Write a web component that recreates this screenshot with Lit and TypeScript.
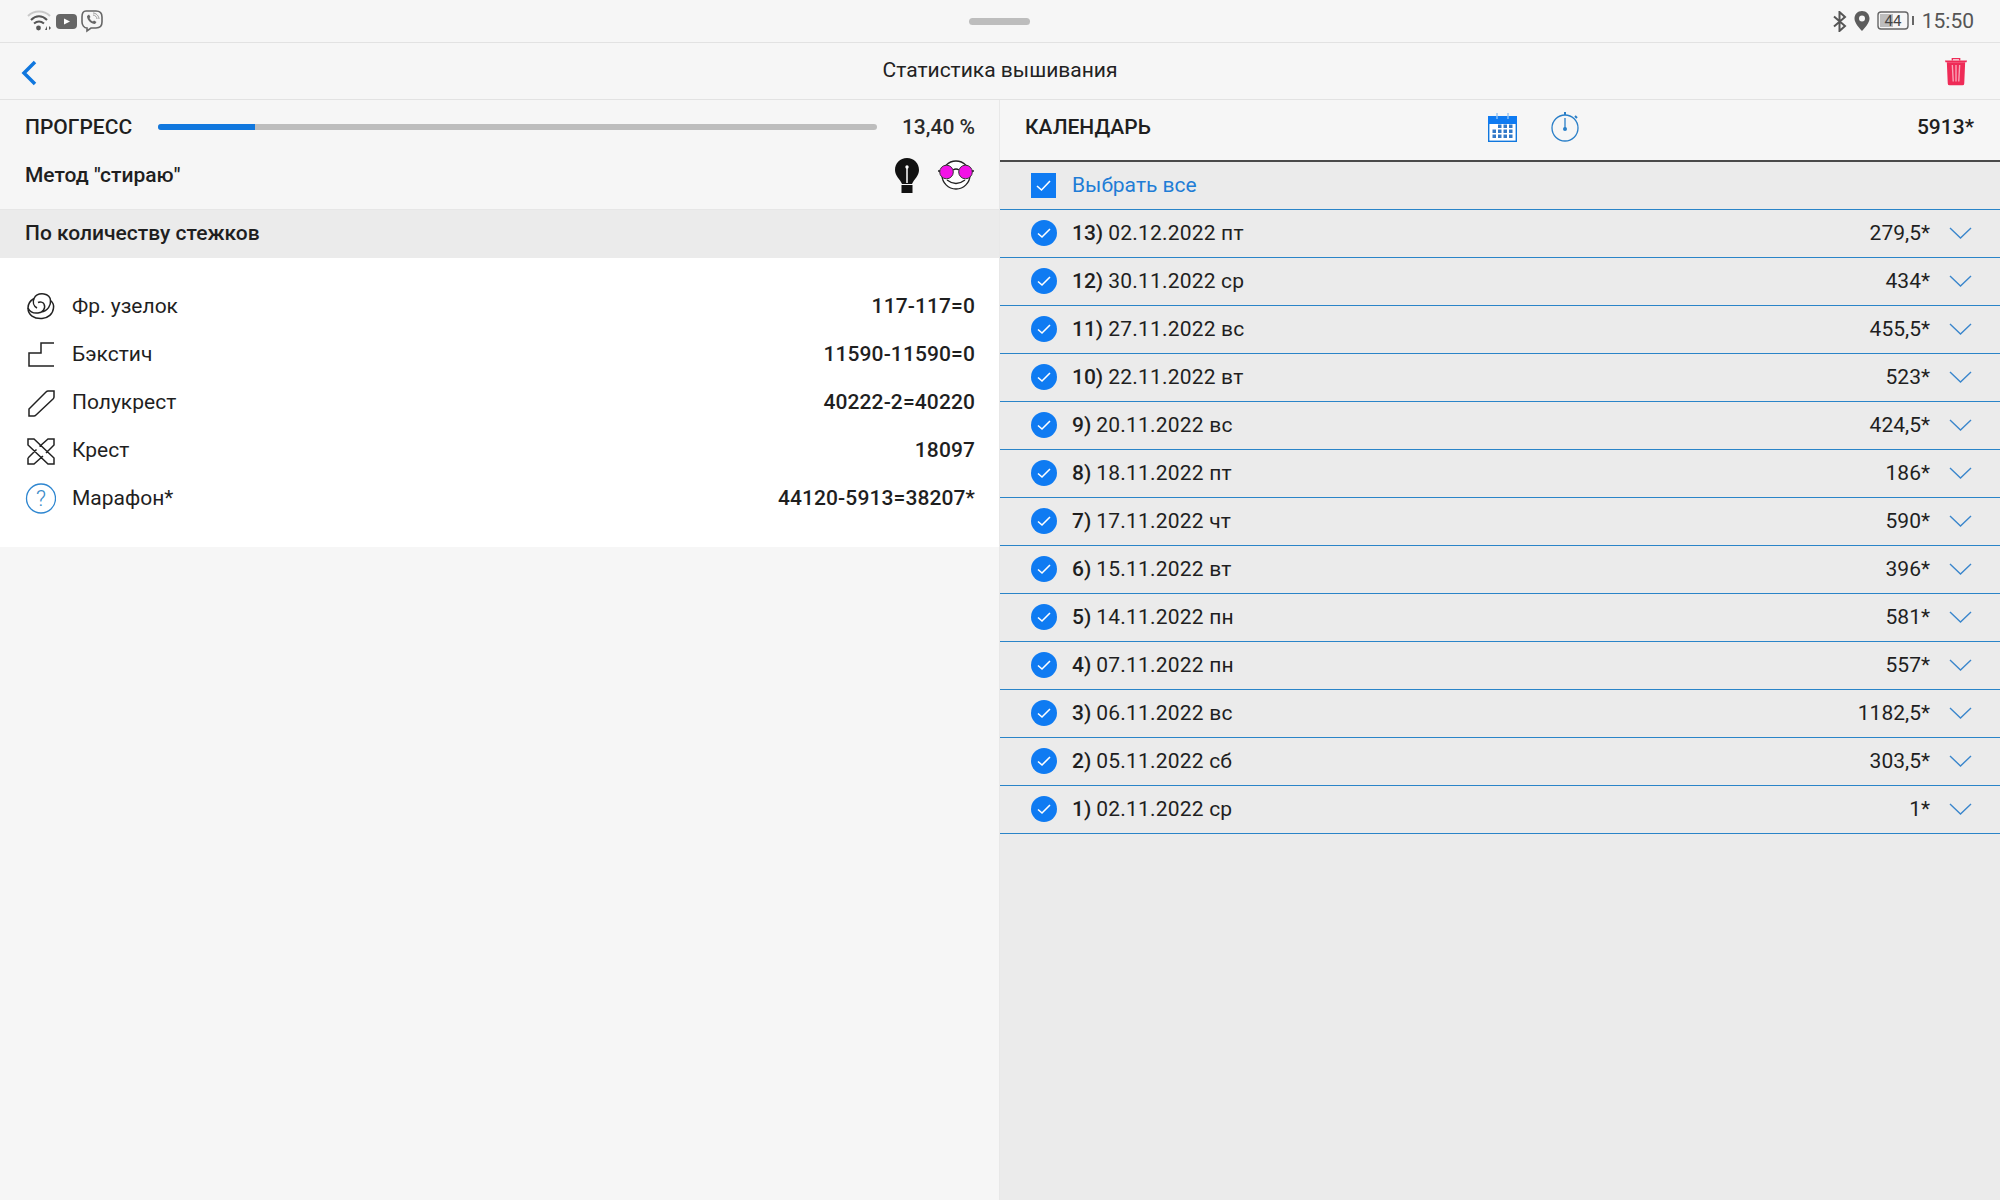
import { LitElement, html, css, svg } from "lit";
import { customElement } from "lit/decorators.js";

const days: [string, string, string][] = [
  ["13)", "02.12.2022 пт", "279,5*"],
  ["12)", "30.11.2022 ср", "434*"],
  ["11)", "27.11.2022 вс", "455,5*"],
  ["10)", "22.11.2022 вт", "523*"],
  ["9)", "20.11.2022 вс", "424,5*"],
  ["8)", "18.11.2022 пт", "186*"],
  ["7)", "17.11.2022 чт", "590*"],
  ["6)", "15.11.2022 вт", "396*"],
  ["5)", "14.11.2022 пн", "581*"],
  ["4)", "07.11.2022 пн", "557*"],
  ["3)", "06.11.2022 вс", "1182,5*"],
  ["2)", "05.11.2022 сб", "303,5*"],
  ["1)", "02.11.2022 ср", "1*"],
];

const icons = {
  knot: svg`<g fill="none" stroke="#222" stroke-width="1.500"><path d="M9 7.500C11 3.500 15 2.500 19 3C23 3.500 25.500 6.500 25.500 9.500C28 11.500 29 14 28.500 17C28 23 23 27 17 27.500C9 28 3 24 3 17C3 13 5.500 9.500 9 7.500Z"/><path d="M9 7.500C7.500 11 8.500 15 12 17M3 17C5 21 9 22.500 13 22C18 21.500 21 17 19 13C18 11 15 10.500 13 11.500M25.500 9.500C26 14 23 20 16 21"/></g>`,
  back: svg`<path d="M29 4H16V14H4V27H29" fill="none" stroke="#222" stroke-width="1.500"/>`,
  half: svg`<path d="M4 22L21 5Q22 4 23 4H29V10Q29 11 28 12L11 28Q10 29 9 29H4Z" fill="none" stroke="#222" stroke-width="1.500"/>`,
  cross: svg`<path d="M3 4H9L29 23V29H23L3 10ZM3 23L11.500 14.500M14.500 11.500L23 4H29V10L21 18M18 21L9 29H3V23" fill="none" stroke="#222" stroke-width="1.500"/>`,
  help: svg`<circle cx="16" cy="15.500" r="14.500" fill="none" stroke="#2e86d0" stroke-width="1.300"/><text x="16" y="23" text-anchor="middle" font-family="Roboto" font-weight="300" font-size="22" fill="#3a8ac8">?</text>`,
};

const stats = [
  [icons.knot, "Фр. узелок", "117-117=0"],
  [icons.back, "Бэкстич", "11590-11590=0"],
  [icons.half, "Полукрест", "40222-2=40220"],
  [icons.cross, "Крест", "18097"],
  [icons.help, "Марафон*", "44120-5913=38207*"],
] as const;

@customElement("app-root")
export class AppRoot extends LitElement {
  static styles = css`
    :host { display: block; width: 2000px; height: 1200px; background: #f6f6f6; font-family: Roboto, sans-serif; color: #1f1f1f; font-size: 21px; overflow: hidden; }
    .status { height: 42px; border-bottom: 1px solid #e2e2e2; display: flex; align-items: center; justify-content: space-between; padding: 0 26px 0 27px; position: relative; }
    .status-left, .status-right { display: flex; align-items: center; }
    .status-left { gap: 4px; }
    .status-right { color: #555; }
    .handle { position: absolute; left: 969px; top: 18px; width: 61px; height: 7px; border-radius: 4px; background: #bdbdbd; }
    .pin { margin-left: 6px; }
    .batt { margin-left: 7px; }
    .time { margin-left: 7px; }
    .titlebar { height: 56px; border-bottom: 1px solid #e2e2e2; display: flex; align-items: center; justify-content: space-between; padding: 0 33px 0 20px; position: relative; }
    .back-btn { position: relative; z-index: 1; margin-top: 3px; }
    .trash { position: relative; z-index: 1; }
    .title { position: absolute; left: 0; right: 0; top: 0; text-align: center; line-height: 55px; color: #222; }
    .columns { display: flex; height: 1100px; }
    .left { width: 999px; flex: none; border-right: 1px solid #e8e8e8; background: #f6f6f6; }
    .right { width: 1000px; flex: none; background: #ebebeb; }
    .progress { height: 54px; display: flex; align-items: center; padding: 0 24px 0 25px; }
    .caps { font-weight: 500; }
    .track { margin-left: 26px; width: 719px; height: 6px; border-radius: 3px; background: #bdbdbd; overflow: hidden; flex: none; }
    .fill { height: 100%; background: #1077de; }
    .pct { margin-left: auto; font-weight: 500; color: #2a2a2a; }
    .method { height: 55px; padding: 0 25px 13px; box-sizing: border-box; display: flex; align-items: center; justify-content: space-between; font-weight: 500; }
    .method-icons { display: flex; align-items: center; gap: 19px; }
    .section { height: 49px; background: #ebebeb; padding: 0 25px 2px; display: flex; align-items: center; font-weight: 500; box-sizing: border-box; border-top: 1px solid #e6e6e6; }
    .stats { background: #fff; height: 289px; padding-top: 24px; box-sizing: border-box; }
    .stat { height: 48px; display: flex; align-items: center; padding: 0 24px 0 25px; }
    .stat svg { width: 31px; height: 31px; flex: none; margin-right: 16px; }
    .stat .v { margin-left: auto; font-weight: 500; letter-spacing: 0.1px; }
    .cal { height: 62px; box-sizing: border-box; padding: 0 26px 6px 25px; background: #f6f6f6; display: flex; align-items: center; border-bottom: 2px solid #4a4a4a; }
    .cal-icons { display: flex; align-items: center; gap: 34px; margin-left: 337px; }
    .total { margin-left: auto; font-weight: 500; }
    .row { height: 48px; box-sizing: border-box; border-bottom: 1.5px solid #2a84c8; display: flex; align-items: center; padding: 0 28px 2px 31px; }
    .row.all { color: #1f7dd6; }
    .box { width: 25px; height: 25px; background: #0f7bf2; margin: 2px 16px 0 0; flex: none; display: flex; }
    .tick { width: 28px; height: 28px; margin-right: 13px; flex: none; }
    .num { font-weight: 500; margin-right: 5px; }
    .date { letter-spacing: 0.2px; }
    .amt { margin-left: auto; }
    .chev { width: 23px; height: 12px; margin-left: 19px; flex: none; }
  `;

  render() {
    return html`
      <div class="status">
        <div class="status-left">
          <svg width="25" height="22" viewBox="0 0 25 22"><path d="M1 6C7 0 17 0 23 6" fill="none" stroke="#c9c9c9" stroke-width="2"/><path d="M4 10C9 5 15 5 20 10M7 13.500C10 11 14 11 17 13.500" fill="none" stroke="#555" stroke-width="2"/><circle cx="11.500" cy="18" r="2.400" fill="#555"/><path d="M18 20l2-4v4zM22 16l2 2-2 2z" fill="#555"/></svg>
          <svg width="21" height="15" viewBox="0 0 21 15"><rect width="21" height="15" rx="4" fill="#666"/><path d="M8 4.500L14 7.500L8 10.500Z" fill="#fff"/></svg>
          <svg width="22" height="23" viewBox="0 0 22 23"><path d="M5 1H15C19 1 21 3 21 7V12C21 16 19 18 15 18H10L6 21V18C3 18 1 15 1 12V7C1 3 2 1 5 1Z" fill="none" stroke="#666" stroke-width="1.600"/><path d="M6 6C6 10 10 14 14 14L15.500 12L13 10.500L12 11.500C10.500 11 9 9.500 8.500 8L9.500 7L8 4.500Z" fill="#666"/><path d="M12 5C14 5 16 7 16 9M12 3C15 3 18 6 18 9" fill="none" stroke="#999" stroke-width="1"/></svg>
        </div>
        <div class="handle"></div>
        <div class="status-right">
          <svg width="16" height="21" viewBox="0 0 16 21"><path d="M2 5.500L13 15L7.500 20V1L13 6L2 15.500" fill="none" stroke="#555" stroke-width="2"/></svg>
          <svg class="pin" width="16" height="20" viewBox="0 0 16 20"><path d="M8 0C3.500 0 .5 3.500 .5 7.500C.5 12 5 16.500 8 20C11 16.500 15.500 12 15.500 7.500C15.500 3.500 12.500 0 8 0Z" fill="#5c5c5c"/><circle cx="8" cy="7.500" r="3" fill="#f6f6f6"/></svg>
          <svg class="batt" width="38" height="20" viewBox="0 0 38 20"><rect x="1" y="1" width="30" height="17" rx="3" fill="none" stroke="#666" stroke-width="1.400"/><rect x="3" y="3" width="13" height="13" fill="#bdbdbd"/><text x="16" y="15" text-anchor="middle" font-family="Roboto" font-size="15" fill="#444">44</text><rect x="35" y="5" width="2" height="9" fill="#666"/></svg>
          <span class="time">15:50</span>
        </div>
      </div>
      <div class="titlebar">
        <svg class="back-btn" width="18" height="26" viewBox="0 0 18 26"><path d="M15 2L4 13L15 24" fill="none" stroke="#1077de" stroke-width="3.500"/></svg>
        <div class="title">Статистика вышивания</div>
        <svg class="trash" width="22" height="29" viewBox="0 0 24 30"><path d="M8 3V1H16V3" fill="none" stroke="#ef2b57" stroke-width="1.500"/><path d="M0 3H24L23.500 5H.5Z" fill="#ef2b57"/><path d="M2 5H22L21 28Q21 30 19 30H5Q3 30 3 28Z" fill="#ef2b57"/><path d="M8 8L9 26M12 8V26M16 8L15 26" stroke="#f9a5b8" stroke-width="1.500"/></svg>
      </div>
      <div class="columns">
        <div class="left">
          <div class="progress">
            <span class="caps">ПРОГРЕСС</span>
            <div class="track"><div class="fill" style="width:13.4%"></div></div>
            <span class="pct">13,40 %</span>
          </div>
          <div class="method">
            <span>Метод "стираю"</span>
            <div class="method-icons">
              <svg width="24" height="35" viewBox="0 0 24 35"><path d="M12 0C5 0 0 5 0 12C0 18 5 21 7 26H17C19 21 24 18 24 12C24 5 19 0 12 0Z" fill="#111"/><rect x="6.500" y="27" width="11" height="8" fill="#111"/><path d="M12 9V25" stroke="#fff" stroke-width="1.500"/><circle cx="12" cy="9" r="1.700" fill="#fff"/></svg>
              <svg width="36" height="30" viewBox="0 0 36 30"><circle cx="18" cy="15" r="14" fill="#fff" stroke="#222" stroke-width="1.300"/><circle cx="8.500" cy="12" r="6.800" fill="#f212e6" stroke="#333"/><circle cx="27.500" cy="12" r="6.800" fill="#f212e6" stroke="#333"/><path d="M15 10Q18 8 21 10M0 11H2M34 11H36M9 20Q18 27 27 20" fill="none" stroke="#222" stroke-width="1.300"/></svg>
            </div>
          </div>
          <div class="section">По количеству стежков</div>
          <div class="stats">
            ${stats.map(
              ([icon, name, val]) => html`
                <div class="stat">
                  <svg viewBox="0 0 31 31">${icon}</svg>
                  <span>${name}</span>
                  <span class="v">${val}</span>
                </div>
              `
            )}
          </div>
        </div>
        <div class="right">
          <div class="cal">
            <span class="caps">КАЛЕНДАРЬ</span>
            <div class="cal-icons">
              <svg width="29" height="29" viewBox="0 0 29 29"><rect x=".7" y="3.700" width="27.600" height="24.600" fill="#fff" stroke="#1077de" stroke-width="1.400"/><rect x="0" y="3" width="29" height="8" fill="#0f7bf2"/><path d="M9 0V6M20 0V6" stroke="#8fc4f5" stroke-width="1.400"/><path d="M10 11.500h3.500v3.500h-3.500zM15.500 11.500h3.500v3.500h-3.500zM21 11.500h3.500v3.500h-3.500zM4.500 16.500h3.500v3.500h-3.500zM10 16.500h3.500v3.500h-3.500zM15.500 16.500h3.500v3.500h-3.500zM21 16.500h3.500v3.500h-3.500zM4.500 21.500h3.500v3.500h-3.500zM10 21.500h3.500v3.500h-3.500zM15.500 21.500h3.500v3.500h-3.500zM21 21.500h3.500v3.500h-3.500z" fill="#3279c8"/></svg>
              <svg width="29" height="30" viewBox="0 0 29 30"><circle cx="14" cy="16" r="13" fill="none" stroke="#2a7fc8" stroke-width="1.300"/><path d="M14 0V3M24 4L26 6" stroke="#2a7fc8" stroke-width="2"/><path d="M14 6V18" stroke="#2a7fc8" stroke-width="1.300"/><circle cx="14" cy="17" r="2" fill="#2a7fc8"/></svg>
            </div>
            <span class="total">5913*</span>
          </div>
          <div class="row all">
            <div class="box"><svg width="25" height="25" viewBox="0 0 25 25"><path d="M6 13L10.500 17L19 8" fill="none" stroke="#fff" stroke-width="1.600"/></svg></div>
            <span>Выбрать все</span>
          </div>
          ${days.map(
            ([n, d, a]) => html`
              <div class="row">
                <svg class="tick" viewBox="0 0 28 28"><circle cx="13" cy="14" r="13" fill="#0f7bf2"/><path d="M7 14.500L11 18L19 10" fill="none" stroke="#fff" stroke-width="1.600"/></svg>
                <span class="num">${n}</span><span class="date">${d}</span>
                <span class="amt">${a}</span>
                <svg class="chev" viewBox="0 0 23 12"><path d="M1 1L11.500 11L22 1" fill="none" stroke="#3a86cc" stroke-width="1.400"/></svg>
              </div>
            `
          )}
        </div>
      </div>
    `;
  }
}
